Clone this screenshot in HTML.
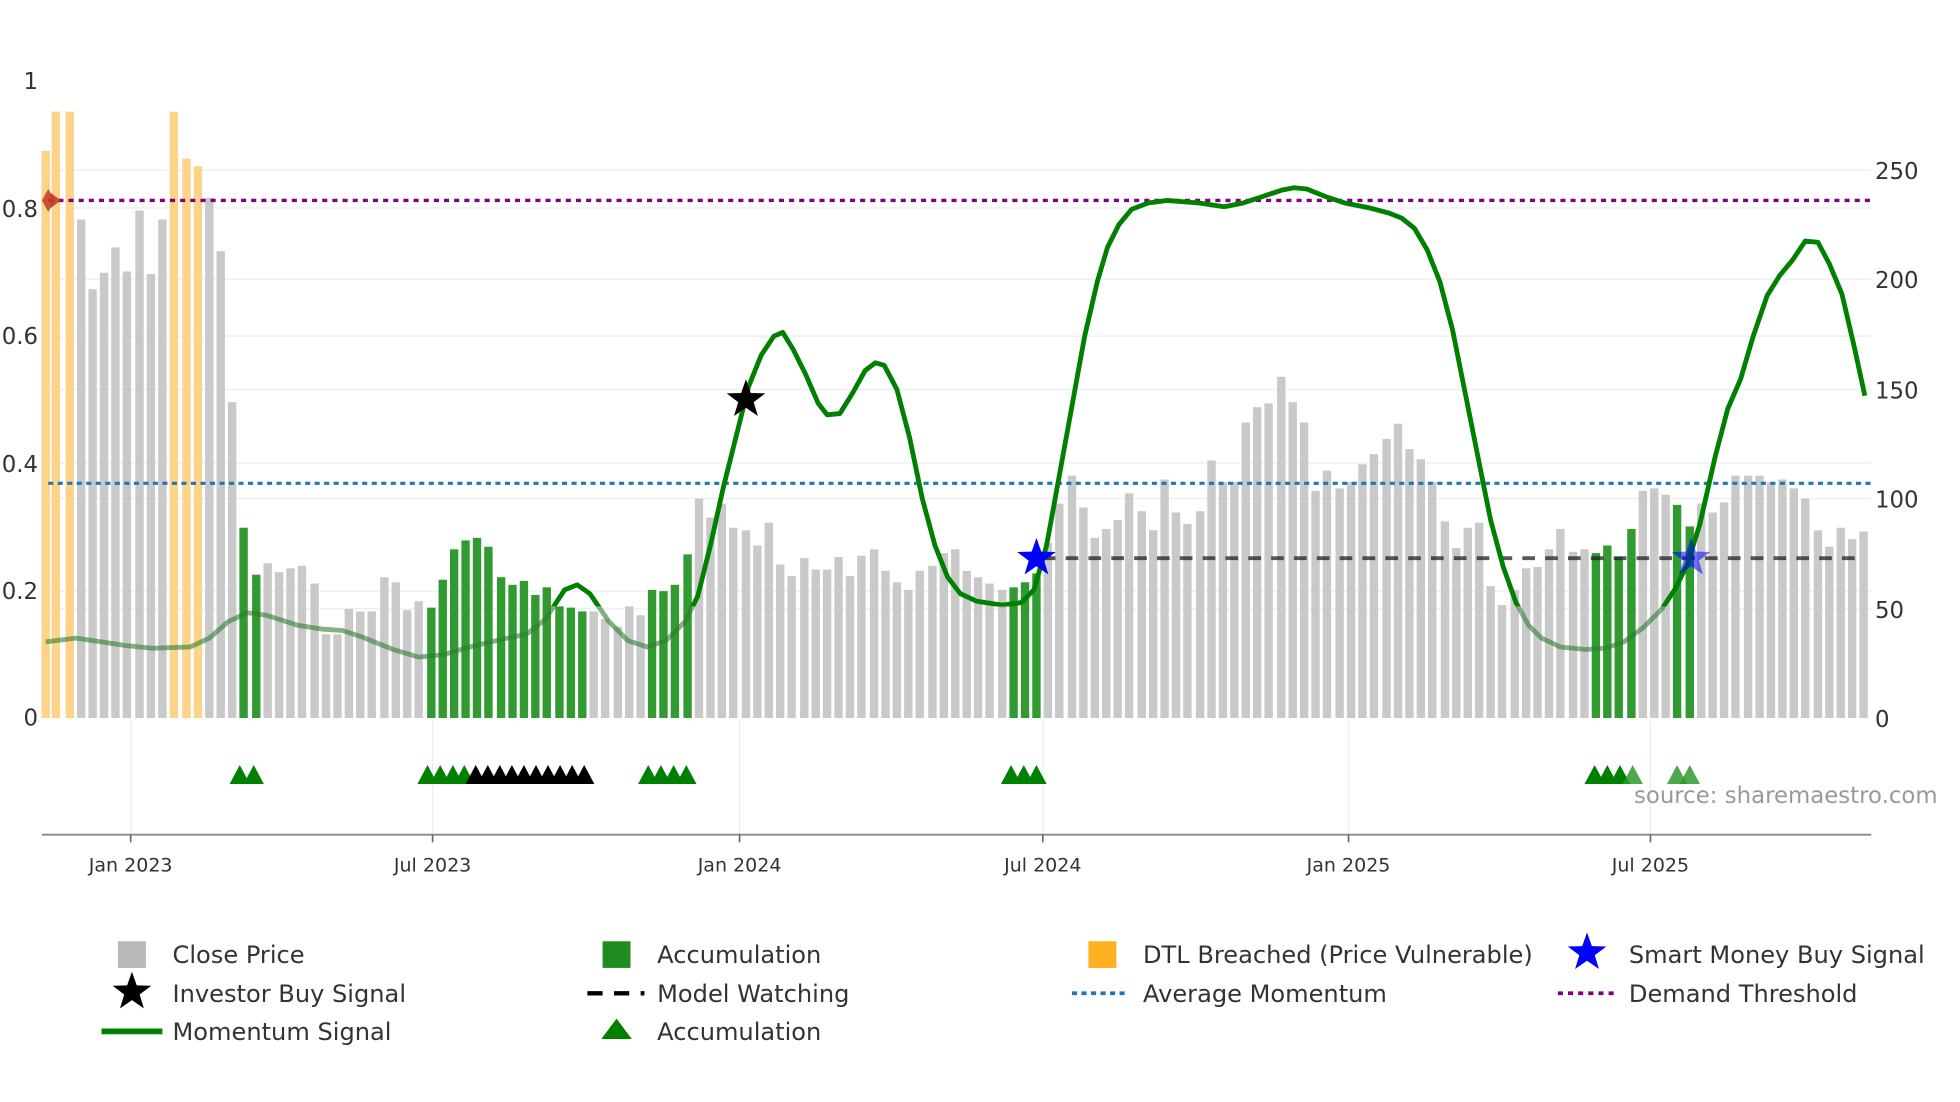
<!DOCTYPE html>
<html><head><meta charset="utf-8"><style>
html,body{margin:0;padding:0;background:#fff;width:1960px;height:1102px;overflow:hidden}
svg{display:block}
text{font-family:"DejaVu Sans","Liberation Sans",sans-serif;fill:#333}
</style></head><body>
<svg id="c" width="1960" height="1102" viewBox="0 0 1545 868.7" preserveAspectRatio="none" xmlns="http://www.w3.org/2000/svg">
<defs>
<clipPath id="hi"><rect x="0" y="0" width="1545" height="478"/></clipPath>
<clipPath id="lo"><rect x="0" y="478" width="1545" height="200"/></clipPath>
</defs>
<g id="grid" stroke="#ebedf2" stroke-width="1">
<line x1="33" x2="1475" y1="134" y2="134"/><line x1="33" x2="1475" y1="220" y2="220"/>
<line x1="33" x2="1475" y1="307" y2="307"/><line x1="33" x2="1475" y1="393" y2="393"/>
<line x1="33" x2="1475" y1="480" y2="480"/>
<line x1="33" x2="1475" y1="164" y2="164"/><line x1="33" x2="1475" y1="265" y2="265"/>
<line x1="33" x2="1475" y1="365" y2="365"/><line x1="33" x2="1475" y1="466" y2="466"/>
<line x1="103" x2="103" y1="568" y2="658"/><line x1="341" x2="341" y1="568" y2="658"/>
<line x1="583" x2="583" y1="568" y2="658"/><line x1="822" x2="822" y1="568" y2="658"/>
<line x1="1063" x2="1063" y1="568" y2="658"/><line x1="1301" x2="1301" y1="568" y2="658"/>
</g>
<g id="bars"></g>
<line x1="38" x2="1475" y1="158" y2="158" stroke="#800080" stroke-width="2.6" stroke-dasharray="4,4"/>
<line x1="38" x2="1475" y1="381" y2="381" stroke="#1f77b4" stroke-width="2.4" stroke-dasharray="4,3.5"/>
<line x1="822" x2="1467" y1="440" y2="440" stroke="#222" stroke-width="3" stroke-dasharray="10,8" opacity="0.75"/>
<polygon points="33,158 38,149 44,158 38,167" fill="#c0392b" opacity="0.85"/>
<polygon points="40,152 48,158 40,164" fill="#c0392b" opacity="0.85"/>
<g id="mom"></g>
<g id="tri"></g>
<polygon id="s1" fill="#000"/>
<polygon id="s2" fill="#0000ff"/>
<polygon id="s3" fill="#0000ff" opacity="0.55"/>
<line x1="33" x2="1475" y1="658" y2="658" stroke="#888" stroke-width="1.5"/>
<g stroke="#666" stroke-width="1.3">
<line x1="103" x2="103" y1="658" y2="664"/><line x1="341" x2="341" y1="658" y2="664"/>
<line x1="583" x2="583" y1="658" y2="664"/><line x1="822" x2="822" y1="658" y2="664"/>
<line x1="1063" x2="1063" y1="658" y2="664"/><line x1="1301" x2="1301" y1="658" y2="664"/>
</g>
<g font-size="15" text-anchor="middle">
<text x="103" y="687">Jan 2023</text><text x="341" y="687">Jul 2023</text>
<text x="583" y="687">Jan 2024</text><text x="822" y="687">Jul 2024</text>
<text x="1063" y="687">Jan 2025</text><text x="1301" y="687">Jul 2025</text>
</g>
<g font-size="18" text-anchor="end">
<text x="30" y="70">1</text><text x="30" y="171">0.8</text><text x="30" y="271">0.6</text>
<text x="30" y="372">0.4</text><text x="30" y="472">0.2</text><text x="30" y="572">0</text>
</g>
<g font-size="18">
<text x="1478" y="141">250</text><text x="1478" y="227">200</text><text x="1478" y="314">150</text>
<text x="1478" y="400">100</text><text x="1478" y="487">50</text><text x="1478" y="573">0</text>
</g>
<text x="1288" y="633" font-size="18" style="fill:#999">source: sharemaestro.com</text>
<g font-size="19">
<rect x="93" y="742" width="22" height="21" fill="#b8b8b8"/><text x="136" y="759">Close Price</text>
<polygon id="ls" fill="#000"/><text x="136" y="790">Investor Buy Signal</text>
<line x1="80" x2="128" y1="813" y2="813" stroke="#008000" stroke-width="4.5"/><text x="136" y="820">Momentum Signal</text>
<rect x="475" y="742" width="22" height="21" fill="#1e8c1e"/><text x="518" y="759">Accumulation</text>
<line x1="463" x2="508" y1="783" y2="783" stroke="#000" stroke-width="3.5" stroke-dasharray="12,9"/><text x="518" y="790">Model Watching</text>
<polygon points="474,819 486,803 498,819" fill="#008000"/><text x="518" y="820">Accumulation</text>
<rect x="858" y="742" width="22" height="21" fill="#ffb020"/><text x="901" y="759">DTL Breached (Price Vulnerable)</text>
<line x1="845" x2="890" y1="783" y2="783" stroke="#1f77b4" stroke-width="3" stroke-dasharray="4,3.5"/><text x="901" y="790">Average Momentum</text>
<polygon id="lb" fill="#0000ff"/><text x="1284" y="759">Smart Money Buy Signal</text>
<line x1="1228" x2="1272" y1="783" y2="783" stroke="#800080" stroke-width="3" stroke-dasharray="4,4"/><text x="1284" y="790">Demand Threshold</text>
</g>
</svg>
<script>
var NS="http://www.w3.org/2000/svg";
function el(p,t,a){var e=document.createElementNS(NS,t);for(var k in a)e.setAttribute(k,a[k]);p.appendChild(e);return e;}
var bars=[[36,119,'o'],[44,88,'o'],[55,88,'o'],[64,173],[73,228],[82,215],[91,195],[100,214],[110,166],[119,216],[128,173],[137,88,'o'],[147,125,'o'],[156,131,'o'],[165,156],[174,198],[183,317],[192,416,'g'],[202,453,'g'],[211,444],[220,451],[229,448],[238,446],[248,460],[257,500],[266,500],[275,480],[284,482],[293,482],[303,455],[312,459],[321,481],[330,474],[340,479,'g'],[349,457,'g'],[358,433,'g'],[367,426,'g'],[376,424,'g'],[385,431,'g'],[395,455,'g'],[404,461,'g'],[413,458,'g'],[422,469,'g'],[431,463,'g'],[441,478,'g'],[450,479,'g'],[459,482,'g'],[468,482],[477,488],[487,494],[496,478],[505,485],[514,465,'g'],[523,466,'g'],[532,461,'g'],[542,437,'g'],[551,393],[560,408],[569,397],[578,416],[588,418],[597,430],[606,412],[615,445],[624,454],[634,440],[643,449],[652,449],[661,439],[670,454],[679,438],[689,433],[698,450],[707,459],[716,465],[725,450],[735,446],[744,436],[753,433],[762,450],[771,455],[780,460],[790,465],[799,463,'g'],[808,459,'g'],[817,452,'g'],[826,428],[835,397],[845,375],[854,400],[863,424],[872,417],[881,410],[890,389],[900,403],[909,418],[918,378],[927,404],[936,413],[946,403],[955,363],[964,380],[973,380],[982,333],[991,321],[1000,318],[1010,297],[1019,317],[1028,333],[1037,387],[1046,371],[1056,385],[1065,380],[1074,366],[1083,358],[1093,346],[1102,334],[1111,354],[1120,362],[1129,380],[1139,411],[1148,432],[1157,416],[1166,412],[1175,462],[1184,477],[1194,465],[1203,448],[1212,447],[1221,433],[1230,417],[1240,435],[1249,433],[1258,436,'g'],[1267,430,'g'],[1276,439,'g'],[1286,417,'g'],[1295,387],[1304,385],[1313,390],[1322,398,'g'],[1332,415,'g'],[1341,397],[1350,404],[1359,396],[1368,375],[1378,375],[1387,375],[1396,380],[1405,378],[1414,385],[1423,393],[1433,418],[1442,431],[1451,416],[1460,425],[1469,419]];
var g=document.getElementById('bars');
bars.forEach(function(b){var c=b[2]=='o'?'#fdd38a':b[2]=='g'?'#319a31':'#c9c9c9';
el(g,'rect',{x:b[0]-3.3,y:b[1],width:6.6,height:566-b[1],fill:c});});
var pts=[[36,506],[60,503],[80,506],[100,509],[120,511],[150,510],[165,503],[180,490],[195,483],[210,485],[235,493],[255,496],[270,497],[285,502],[310,512],[330,518],[350,516],[370,510],[400,503],[415,500],[430,488],[445,465],[455,461],[465,468],[480,490],[495,505],[510,510],[525,505],[540,490],[550,470],[560,430],[570,385],[580,345],[590,305],[600,280],[610,265],[617,262],[625,275],[635,295],[645,318],[652,327],[662,326],[672,310],[682,292],[690,286],[697,288],[707,307],[717,345],[727,393],[737,430],[747,455],[757,468],[770,474],[790,477],[805,475],[815,465],[825,430],[835,375],[845,320],[855,265],[865,222],[873,195],[882,177],[892,165],[905,160],[920,158],[945,160],[965,163],[980,160],[995,155],[1010,150],[1020,148],[1030,149],[1045,155],[1060,160],[1080,164],[1095,168],[1105,172],[1115,180],[1125,197],[1135,222],[1145,260],[1155,310],[1165,360],[1175,410],[1185,447],[1195,475],[1205,493],[1215,503],[1230,510],[1250,512],[1265,511],[1280,506],[1295,495],[1310,480],[1320,465],[1330,445],[1340,413],[1352,360],[1362,322],[1372,299],[1382,265],[1393,233],[1403,217],[1413,205],[1423,190],[1433,191],[1442,208],[1452,232],[1462,275],[1470,312]];
var ps=pts.map(function(p){return p.join(',')}).join(' ');
var m=document.getElementById('mom');
el(m,'polyline',{points:ps,fill:'none',stroke:'#008000','stroke-width':3.8,'stroke-linejoin':'round','clip-path':'url(#hi)'});
el(m,'polyline',{points:ps,fill:'none',stroke:'#2e7d32','stroke-width':3.8,opacity:0.6,'stroke-linejoin':'round','clip-path':'url(#lo)'});
var t=document.getElementById('tri');
function tri(x,c,o){el(t,'polygon',{points:(x-8)+',618 '+x+',603 '+(x+8)+',618',fill:c,opacity:o||1});}
[189,200,337,347,357,366,511,521,531,541,797,807,817,1257,1267,1277].forEach(function(x){tri(x,'#008000');});
for(var x=375;x<=461;x+=9.5)tri(x,'#000');
tri(1287,'#2e9a2e',0.85);tri(1322,'#2e9a2e',0.85);tri(1332,'#2e9a2e',0.85);
function star(id,cx,cy,R){var r=R*0.4,a=[];for(var i=0;i<10;i++){var ang=Math.PI/2+i*Math.PI/5,rr=i%2?r:R;a.push((cx+rr*Math.cos(ang)).toFixed(1)+','+(cy-rr*Math.sin(ang)).toFixed(1));}document.getElementById(id).setAttribute('points',a.join(' '));}
star('s1',588,315,16);star('s2',817,440,16);star('s3',1333,440,16);star('ls',104,782,16);star('lb',1251,751,16);
</script>
</body></html>
